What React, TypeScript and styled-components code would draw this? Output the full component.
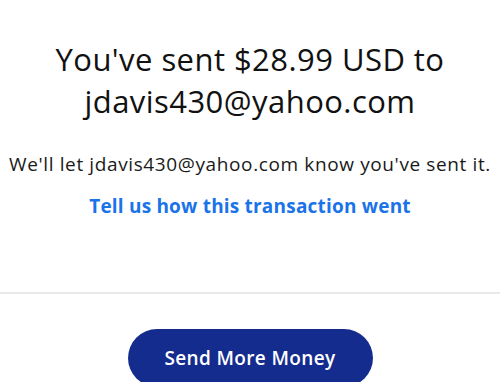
import React from "react";
import styled, { createGlobalStyle } from "styled-components";

const Global = createGlobalStyle`
  html, body { margin: 0; padding: 0; background: #ffffff; }
  body { font-family: "Open Sans", "Liberation Sans", sans-serif; overflow: hidden; }
`;

const Page = styled.main`
  width: 500px;
  display: flex;
  flex-direction: column;
  align-items: stretch;
`;

const Summary = styled.section`
  display: flex;
  flex-direction: column;
  align-items: center;
  text-align: center;
  padding: 38px 0 0;
`;

const Headline = styled.h1`
  margin: 0;
  font-size: 31px;
  line-height: 42px;
  font-weight: 400;
  letter-spacing: 0.45px;
  color: #111111;
`;

const Note = styled.p`
  margin: 29px 0 0;
  font-size: 19px;
  line-height: 26px;
  letter-spacing: 0.62px;
  color: #1a1a1a;
  white-space: nowrap;
`;

const FeedbackLink = styled.a`
  margin-top: 16px;
  font-size: 19px;
  line-height: 26px;
  font-weight: 700;
  letter-spacing: 0.2px;
  color: #1a73e8;
  text-decoration: none;
`;

const Divider = styled.hr`
  flex-shrink: 0;
  margin: 73px 0 0;
  border: 0;
  height: 2px;
  background: #e8e8e8;
`;

const Actions = styled.div`
  display: flex;
  justify-content: center;
  padding-top: 35px;
`;

const PrimaryButton = styled.button`
  width: 245px;
  height: 58px;
  flex-shrink: 0;
  border: 0;
  border-radius: 29px;
  background: #142c8e;
  color: #ffffff;
  font-family: inherit;
  font-size: 19px;
  font-weight: 600;
  letter-spacing: 0.35px;
`;

export default function App() {
  return (
    <>
      <Global />
      <Page>
        <Summary>
          <Headline>
            You've sent $28.99 USD to
            <br />
            jdavis430@yahoo.com
          </Headline>
          <Note>We'll let jdavis430@yahoo.com know you've sent it.</Note>
          <FeedbackLink href="#">Tell us how this transaction went</FeedbackLink>
        </Summary>
        <Divider />
        <Actions>
          <PrimaryButton>Send More Money</PrimaryButton>
        </Actions>
      </Page>
    </>
  );
}
